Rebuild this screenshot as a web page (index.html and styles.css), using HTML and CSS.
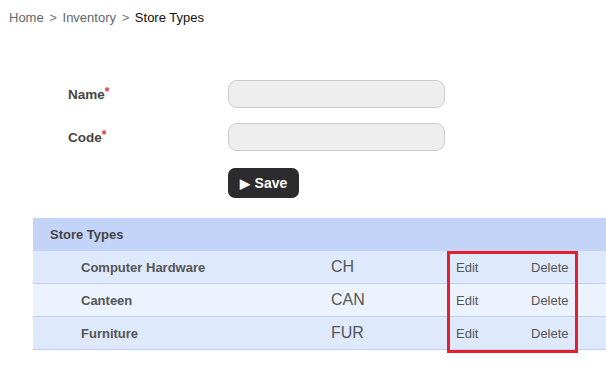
FILE: index.html
```html
<!DOCTYPE html>
<html lang="en">

<head>
  <meta charset="UTF-8">
  <meta name="viewport" content="width=device-width, initial-scale=1.0">
  <title>Store Types</title>
  <link rel="stylesheet" href="styles.css">
</head>

<body>
  <div class="breadcrumb">
    <a href="#">Home</a> <span class="sep">&gt;</span> <a href="#">Inventory</a> <span class="sep">&gt;</span> <span class="current">Store Types</span>
  </div>

  <form class="form">
    <div class="form-row">
      <label for="name">Name<span class="req">*</span></label>
      <input type="text" id="name">
    </div>
    <div class="form-row">
      <label for="code">Code<span class="req">*</span></label>
      <input type="text" id="code">
    </div>
    <div class="form-row actions">
      <button type="button" class="save"><span class="tri">&#9654;</span> Save</button>
    </div>
  </form>

  <div class="list">
    <table class="types">
      <thead>
        <tr><th colspan="4">Store Types</th></tr>
      </thead>
      <tbody>
        <tr><td class="name">Computer Hardware</td><td class="code">CH</td><td class="edit">Edit</td><td class="del">Delete</td></tr>
        <tr><td class="name">Canteen</td><td class="code">CAN</td><td class="edit">Edit</td><td class="del">Delete</td></tr>
        <tr><td class="name">Furniture</td><td class="code">FUR</td><td class="edit">Edit</td><td class="del">Delete</td></tr>
      </tbody>
    </table>
    <div class="highlight"></div>
  </div>
</body>

</html>
```

FILE: styles.css
```css
body {
  margin: 0;
  padding: 10px 0 20px 9px;
  font-family: "Liberation Sans", Arial, sans-serif;
  font-size: 13px;
  color: #333;
}

.breadcrumb {
  height: 15px;
  line-height: 15px;
  color: #666;
}

.breadcrumb a {
  color: #666;
  text-decoration: none;
}

.breadcrumb .sep {
  color: #777;
  margin: 0 2px;
}

.breadcrumb .current {
  color: #111;
}

.form {
  margin-top: 55px;
  padding-left: 59px;
}

.form-row {
  display: flex;
  align-items: center;
  margin-bottom: 15px;
}

.form-row label {
  width: 160px;
  font-weight: bold;
  font-size: 13.5px;
  line-height: 16px;
  margin-top: -2px;
  color: #444;
}

.req {
  color: #e0393b;
  vertical-align: 3px;
  font-size: 12px;
}

.form-row input {
  width: 217px;
  height: 28px;
  box-sizing: border-box;
  background: #eee;
  border: 1px solid #ccc;
  border-radius: 9px;
  margin: 0;
  padding: 0 8px;
}

.actions {
  padding-left: 160px;
  margin-top: 17px;
  margin-bottom: 20px;
}

.save {
  width: 71px;
  height: 30px;
  background: #2c2c2e;
  color: #fff;
  border: none;
  border-radius: 7px;
  font-family: "Liberation Sans", Arial, sans-serif;
  font-size: 14px;
  font-weight: bold;
  padding: 0;
  text-align: center;
}

.save .tri {
  font-size: 13px;
  margin-right: 1px;
}

.list {
  position: relative;
  margin-left: 24px;
}

.types {
  width: 100%;
  border-collapse: collapse;
}

.types th {
  background: #c3d4f8;
  height: 33px;
  text-align: left;
  padding: 0 0 0 17px;
  font-weight: bold;
  color: #444;
}

.types td {
  height: 32px;
  padding: 0;
  border-bottom: 1px solid #bdcff3;
  color: #555;
}

.types tbody tr {
  background: #dfe9fc;
}

.types tbody tr:nth-child(even) {
  background: #edf3fe;
}

.types .name {
  width: 298px;
  padding-left: 48px;
  font-weight: bold;
  box-sizing: border-box;
}

.types .code {
  width: 125px;
  font-size: 16px;
}

.types .edit {
  width: 75px;
}

.types .del {
  color: #555;
}

.highlight {
  position: absolute;
  left: 414px;
  top: 33px;
  width: 125px;
  height: 96px;
  border: 3px solid #e3202d;
}
```
